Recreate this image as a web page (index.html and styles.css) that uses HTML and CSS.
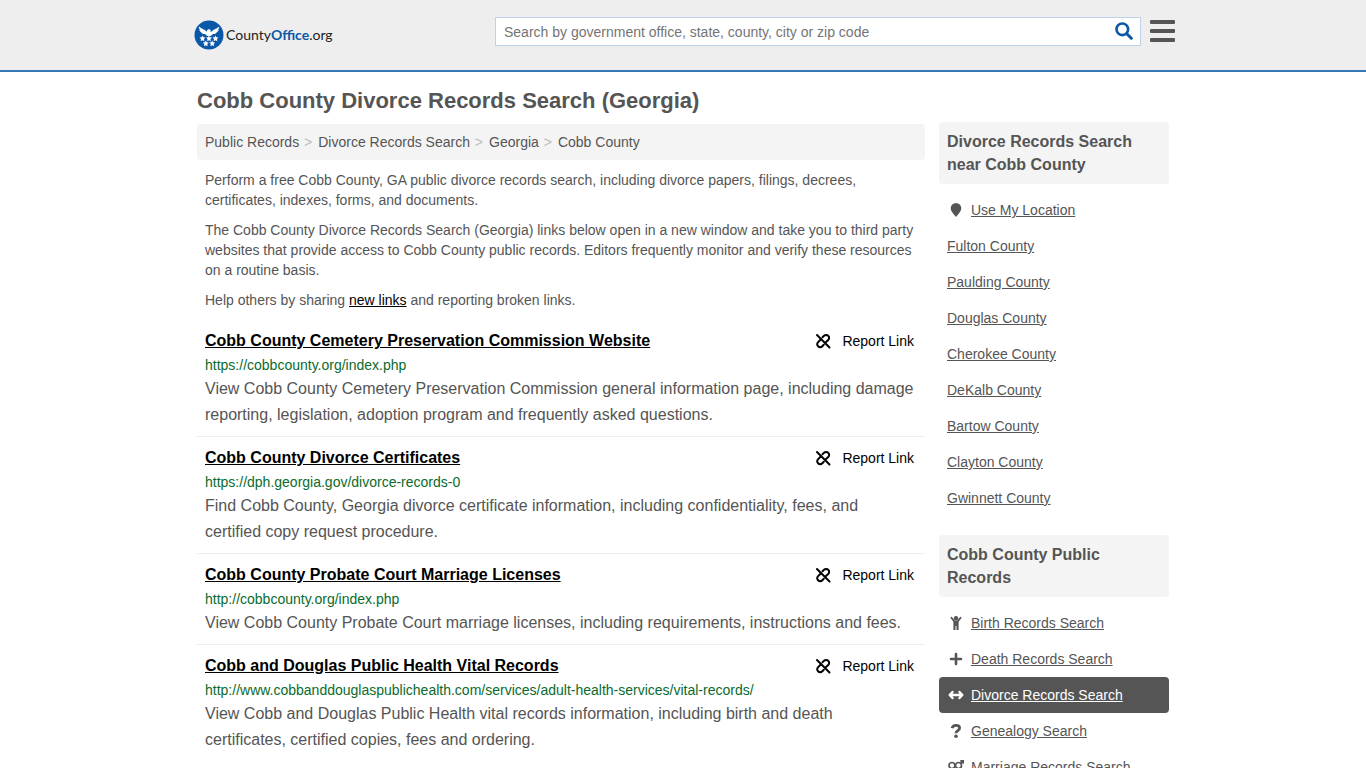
FILE: index.html
```html
<!DOCTYPE html>
<html lang="en">
<head>
  <meta charset="UTF-8">
  <meta name="viewport" content="width=device-width, initial-scale=1">
  <title>Cobb County Divorce Records Search (Georgia)</title>
  <link rel="stylesheet" href="styles.css">
</head>
<body>

<!-- icon sprite -->
<svg class="sprite" aria-hidden="true">
  <symbol id="i-unlink" viewBox="0 0 16 16">
    <g fill="none" stroke="currentColor" stroke-width="2" stroke-linecap="round">
      <path d="M2 2l12.500 12.500"/>
      <path d="M7.500 4.300l1.500-1.500a2.900 2.900 0 0 1 4.200 0 2.900 2.900 0 0 1 0 4.200L10.500 9.500"/>
      <path d="M8.800 11.800l-1.500 1.500a2.900 2.900 0 0 1-4.200 0 2.900 2.900 0 0 1 0-4.200L5.800 6.500"/>
    </g>
  </symbol>
  <symbol id="i-pin" viewBox="0 0 16 16"><path fill="currentColor" d="M8 1a5.300 5.300 0 0 1 5.300 5.300C13.300 9.500 10 12.500 8 15 6 12.500 2.700 9.500 2.700 6.300A5.300 5.300 0 0 1 8 1z"/></symbol>
  <symbol id="i-child" viewBox="0 0 16 16">
    <circle cx="8" cy="3.200" r="2.200" fill="currentColor"/>
    <path fill="none" stroke="currentColor" stroke-width="1.800" stroke-linecap="round" stroke-linejoin="round" d="M3.400 2.800L6.300 6.400h3.400l2.900-3.600"/>
    <path fill="currentColor" d="M5.400 6h5.200v9H8.500v-4h-1v4H5.400z"/>
  </symbol>
  <symbol id="i-plus" viewBox="0 0 16 16"><path fill="none" stroke="currentColor" stroke-width="2.600" stroke-linecap="round" d="M8 3v10M3 8h10"/></symbol>
  <symbol id="i-arrows" viewBox="0 0 16 16"><path fill="none" stroke="currentColor" stroke-width="2.400" stroke-linecap="round" stroke-linejoin="round" d="M2 8h12M4.500 5L1.700 8l2.800 3M11.500 5l2.800 3-2.800 3"/></symbol>
  <symbol id="i-question" viewBox="0 0 16 16">
    <path fill="none" stroke="currentColor" stroke-width="2.800" d="M4 5.200C4.600 3 5.900 2.400 8 2.400c2.300 0 3.600 1 3.600 2.700C11.600 7.700 8 7.500 8 10.300"/>
    <circle cx="8" cy="13.300" r="1.800" fill="currentColor"/>
  </symbol>
  <symbol id="i-rings" viewBox="0 0 16 16">
    <g fill="none" stroke="currentColor" stroke-width="1.700">
      <circle cx="4" cy="6.500" r="3"/><circle cx="10.500" cy="6.500" r="3"/>
      <path d="M4 9.500V15M2 12.500h4M12.500 4.500L15 2M12.300 1.800H15.200V4.700"/>
    </g>
  </symbol>
</svg>

<header class="header">
  <div class="header-inner">
    <a class="logo" href="#" aria-label="CountyOffice.org">
      <svg class="logo-mark" viewBox="0 0 30 30" aria-hidden="true">
        <circle cx="15" cy="15" r="14.500" fill="#0b57a8"/>
        <g fill="#fff">
          <path d="M4.800 6.500c2.200 2.200 5.700 2.600 7.900 5.200.3-1.200.9-2.300 2.100-2.400.9-.1 1.600.5 2.100 1-.6.100-.8.500-.6 1.200l.9.300c2.200-2.700 5.800-3.100 8-5.300.1 1.300-.4 2.500-1.300 3.400l.9-.2c-.5 1.300-1.400 2.200-2.600 2.700l.7.100c-1 1-2.300 1.500-3.700 1.600-1 .4-1.600 1.100-2.300 1.800H13c-.6-.7-1.200-1.400-2.200-1.800-1.400-.1-2.700-.6-3.700-1.600l.7-.1c-1.200-.5-2.100-1.400-2.600-2.700l.9.200c-.9-.9-1.400-2.100-1.300-3.400z"/>
          <path id="star" d="M8.500 15.400l.9 1.900 2.100.3-1.500 1.500.3 2.100-1.800-1-1.800 1 .3-2.100-1.500-1.500 2.100-.3z"/>
          <use href="#star" x="6.500"/>
          <use href="#star" x="13"/>
          <use href="#star" x="3.300" y="5"/>
          <use href="#star" x="9.700" y="5"/>
        </g>
      </svg>
      <span class="logo-text">County<b>Office</b>.org</span>
    </a>
    <form class="search">
      <input type="search" aria-label="Search" placeholder="Search by government office, state, county, city or zip code">
      <button type="button" aria-label="Search">
        <svg viewBox="0 0 18 18" aria-hidden="true"><g fill="none" stroke="currentColor" stroke-linecap="round"><circle cx="7.300" cy="7.300" r="5.800" stroke-width="2.600"/><path stroke-width="3" d="M12 12l4.300 4.300"/></g></svg>
      </button>
    </form>
    <button class="menu" type="button" aria-label="Menu"><span></span><span></span><span></span></button>
  </div>
</header>

<div class="page">
  <main class="main">
    <h1>Cobb County Divorce Records Search (Georgia)</h1>
    <nav class="breadcrumb" aria-label="Breadcrumb">
      <a href="#">Public Records</a>
      <a href="#">Divorce Records Search</a>
      <a href="#">Georgia</a>
      <a href="#">Cobb County</a>
    </nav>
    <div class="intro">
      <p>Perform a free Cobb County, GA public divorce records search, including divorce papers, filings, decrees, certificates, indexes, forms, and documents.</p>
      <p>The Cobb County Divorce Records Search (Georgia) links below open in a new window and take you to third party websites that provide access to Cobb County public records. Editors frequently monitor and verify these resources on a routine basis.</p>
      <p>Help others by sharing <a href="#">new links</a> and reporting broken links.</p>
    </div>

    <article class="result">
      <div class="result-head">
        <h2><a href="#">Cobb County Cemetery Preservation Commission Website</a></h2>
        <button class="report" type="button"><svg><use href="#i-unlink"/></svg>Report Link</button>
      </div>
      <div class="url">https://cobbcounty.org/index.php</div>
      <p>View Cobb County Cemetery Preservation Commission general information page, including damage reporting, legislation, adoption program and frequently asked questions.</p>
    </article>
    <article class="result">
      <div class="result-head">
        <h2><a href="#">Cobb County Divorce Certificates</a></h2>
        <button class="report" type="button"><svg><use href="#i-unlink"/></svg>Report Link</button>
      </div>
      <div class="url">https://dph.georgia.gov/divorce-records-0</div>
      <p>Find Cobb County, Georgia divorce certificate information, including confidentiality, fees, and certified copy request procedure.</p>
    </article>
    <article class="result">
      <div class="result-head">
        <h2><a href="#">Cobb County Probate Court Marriage Licenses</a></h2>
        <button class="report" type="button"><svg><use href="#i-unlink"/></svg>Report Link</button>
      </div>
      <div class="url">http://cobbcounty.org/index.php</div>
      <p>View Cobb County Probate Court marriage licenses, including requirements, instructions and fees.</p>
    </article>
    <article class="result">
      <div class="result-head">
        <h2><a href="#">Cobb and Douglas Public Health Vital Records</a></h2>
        <button class="report" type="button"><svg><use href="#i-unlink"/></svg>Report Link</button>
      </div>
      <div class="url">http://www.cobbanddouglaspublichealth.com/services/adult-health-services/vital-records/</div>
      <p>View Cobb and Douglas Public Health vital records information, including birth and death certificates, certified copies, fees and ordering.</p>
    </article>
  </main>

  <aside class="sidebar">
    <h3>Divorce Records Search near Cobb County</h3>
    <ul>
      <li><a href="#"><svg><use href="#i-pin"/></svg><span>Use My Location</span></a></li>
      <li><a href="#"><span>Fulton County</span></a></li>
      <li><a href="#"><span>Paulding County</span></a></li>
      <li><a href="#"><span>Douglas County</span></a></li>
      <li><a href="#"><span>Cherokee County</span></a></li>
      <li><a href="#"><span>DeKalb County</span></a></li>
      <li><a href="#"><span>Bartow County</span></a></li>
      <li><a href="#"><span>Clayton County</span></a></li>
      <li><a href="#"><span>Gwinnett County</span></a></li>
    </ul>
    <h3>Cobb County Public Records</h3>
    <ul>
      <li><a href="#"><svg><use href="#i-child"/></svg><span>Birth Records Search</span></a></li>
      <li><a href="#"><svg><use href="#i-plus"/></svg><span>Death Records Search</span></a></li>
      <li><a class="active" href="#"><svg><use href="#i-arrows"/></svg><span>Divorce Records Search</span></a></li>
      <li><a href="#"><svg><use href="#i-question"/></svg><span>Genealogy Search</span></a></li>
      <li><a href="#"><svg><use href="#i-rings"/></svg><span>Marriage Records Search</span></a></li>
    </ul>
  </aside>
</div>

</body>
</html>
```
FILE: styles.css
```css
* {
  box-sizing: border-box;
}

body {
  margin: 0;
  background: #fff;
  color: #555;
  font-family: "Liberation Sans", Arial, sans-serif;
  font-size: 14px;
  line-height: 20px;
  overflow-x: hidden;
}

a {
  color: inherit;
}

button {
  border: 0;
  padding: 0;
  background: none;
  font: inherit;
  cursor: pointer;
}

.sprite {
  display: none;
}

/* header */
.header {
  background: #eee;
  border-bottom: 2px solid #337ab7;
}

.header-inner {
  max-width: 984px;
  height: 70px;
  margin: 0 auto;
  padding-bottom: 8px;
  display: flex;
  align-items: center;
}

.logo {
  flex: 1;
  display: flex;
  align-items: center;
  gap: 2px;
  padding-top: 8px;
  padding-left: 3px;
  color: #222;
  text-decoration: none;
}

.logo-mark {
  width: 30px;
  height: 30px;
}

.logo-text {
  font-family: Lato, "Liberation Sans", sans-serif;
  font-size: 14px;
  line-height: 22px;
}

.logo-text b {
  color: #0b57a8;
}

.search {
  flex: 0 1 646px;
  height: 29px;
  display: flex;
  background: #fff;
  border: 1px solid #bcd3e8;
}

.search input {
  flex: 1;
  min-width: 0;
  border: 0;
  padding: 2px 8px 0;
  background: none;
  color: #555;
  font: inherit;
  outline: none;
}

.search input::placeholder {
  color: #757575;
}

.search button {
  width: 32px;
  display: flex;
  align-items: center;
  justify-content: center;
  color: #0b57a8;
}

.search svg {
  width: 18px;
  height: 18px;
}

.menu {
  width: 25px;
  margin-left: 9px;
  display: grid;
  gap: 5px;
}

.menu span {
  height: 4px;
  border-radius: 1px;
  background: #555;
}

/* layout */
.page {
  max-width: 972px;
  margin: 0 auto;
  display: flex;
  gap: 14px;
}

.main {
  flex: 1;
  min-width: 0;
}

h1 {
  margin: 16px 0 10px;
  font-size: 22px;
  line-height: 26px;
}

.breadcrumb {
  padding: 8px;
  background: #f4f4f4;
  border-radius: 4px;
}

.breadcrumb a {
  text-decoration: none;
}

.breadcrumb a + a::before {
  content: ">";
  padding: 0 6px 0 1px;
  color: #bbb;
}

.intro {
  padding: 0 8px;
}

.intro p {
  margin: 10px 0;
}

.intro a {
  color: #000;
}

/* results */
.result {
  padding: 8px;
  border-bottom: 1px solid #eee;
}

.result:last-child {
  border-bottom: 0;
}

.result-head {
  display: flex;
  align-items: center;
  justify-content: space-between;
}

.result h2 {
  margin: 0;
  color: #000;
  font-size: 16px;
  line-height: 26px;
}

.report {
  display: flex;
  align-items: center;
  gap: 11px;
  padding-right: 3px;
  color: #000;
}

.report svg {
  width: 16px;
  height: 16px;
}

.url {
  color: #0a6b2d;
  line-height: 22px;
}

.result p {
  margin: 0;
  font-size: 16px;
  line-height: 26px;
}

/* sidebar */
.sidebar {
  width: 230px;
  padding-top: 50px;
}

.sidebar h3 {
  margin: 0 0 8px;
  padding: 8px;
  background: #f4f4f4;
  border-radius: 4px;
  font-size: 16px;
  line-height: 23px;
}

.sidebar ul {
  margin: 0 0 19px;
  padding: 0;
  list-style: none;
}

.sidebar a {
  display: flex;
  align-items: center;
  gap: 7px;
  padding: 8px;
  border-radius: 4px;
  text-decoration: none;
}

.sidebar li span {
  text-decoration: underline;
}

.sidebar svg {
  width: 16px;
  height: 16px;
  margin-left: 1px;
}

.sidebar .active {
  background: #555;
  color: #fff;
}
```
